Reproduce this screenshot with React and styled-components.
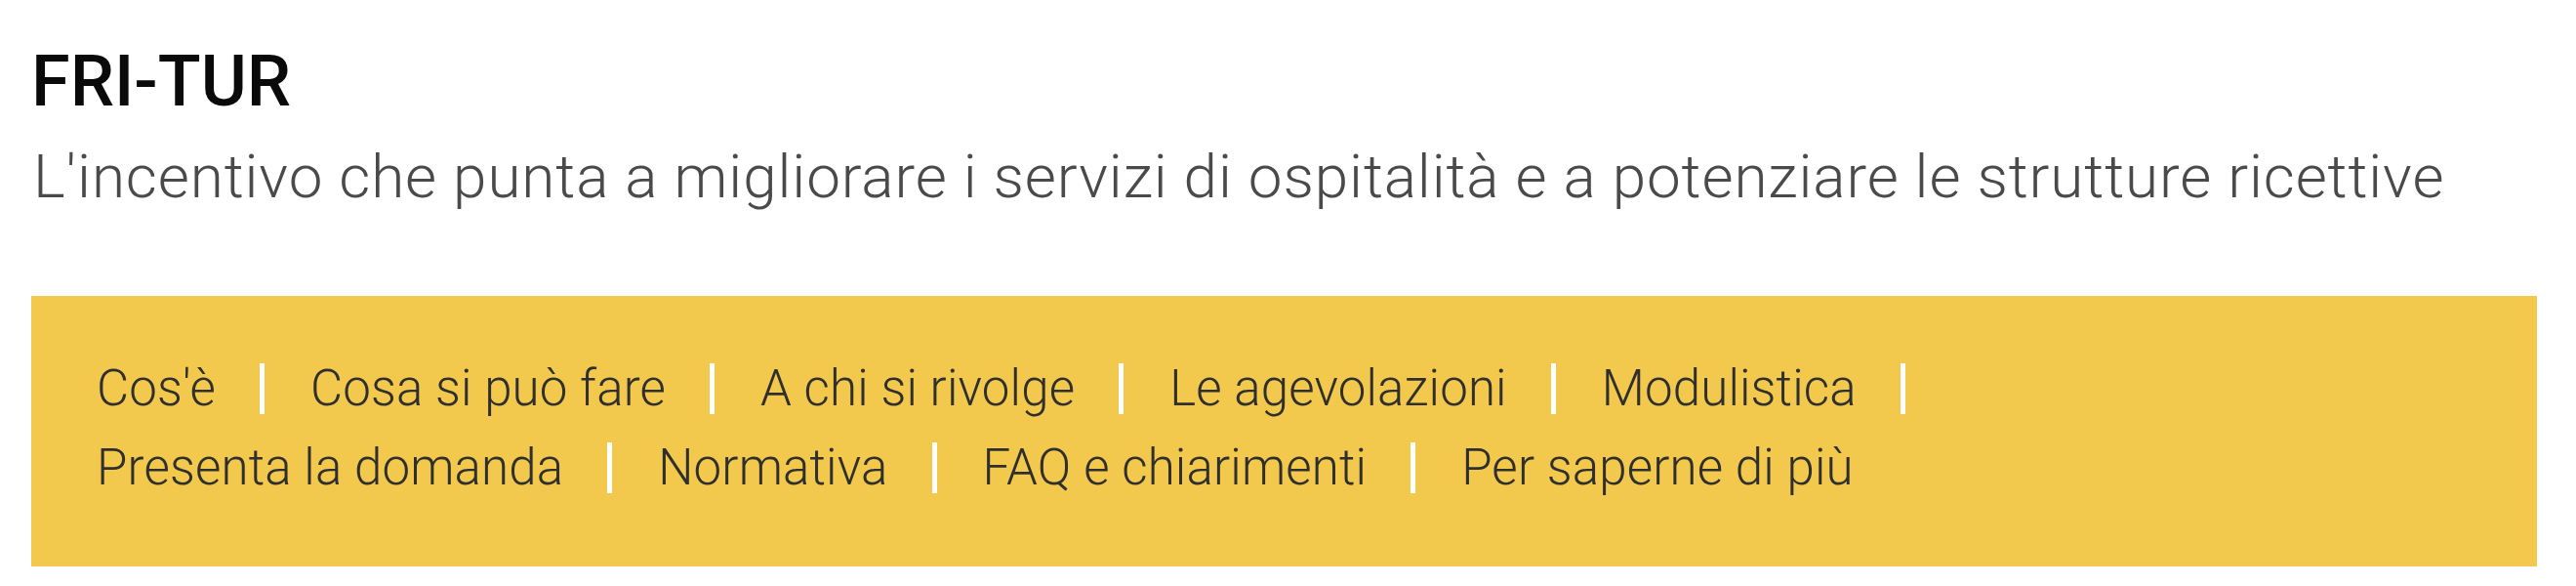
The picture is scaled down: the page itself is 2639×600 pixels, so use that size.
import React from 'react'
import styled, { createGlobalStyle } from 'styled-components'

const GlobalStyle = createGlobalStyle`
  body {
    margin: 0;
    background: #fff;
    font-family: Roboto, "Liberation Sans", sans-serif;
  }
`

const Page = styled.div`
  padding: 48px 40px 18px 32px;
`

const Title = styled.h1`
  margin: 0;
  font-size: 72px;
  line-height: 72px;
  font-weight: 500;
  color: #0a0a0a;
`

const Subtitle = styled.p`
  margin: 20px 0 0 2px;
  font-size: 62px;
  line-height: 81px;
  font-weight: 300;
  letter-spacing: 0.9px;
  color: #4a4a4a;
`

const Box = styled.nav`
  margin-top: 82px;
  width: 2567px;
  box-sizing: border-box;
  background: #f2c94c;
  padding: 54px 67px 61px;
`

const Menu = styled.ul`
  list-style: none;
  margin: 0;
  padding: 0;
  max-width: 2000px;
  display: flex;
  flex-wrap: wrap;
  column-gap: 47px;
`

const Item = styled.li`
  display: flex;
  align-items: center;
  gap: 45px;
  font-size: 51px;
  line-height: 81px;
  font-weight: 300;
  letter-spacing: 0.15px;
  color: #2f2f2f;

  &:not(:last-child)::after {
    content: '';
    display: block;
    width: 5px;
    height: 52px;
    background: #fff;
  }
`

const voci = [
  "Cos'è",
  'Cosa si può fare',
  'A chi si rivolge',
  'Le agevolazioni',
  'Modulistica',
  'Presenta la domanda',
  'Normativa',
  'FAQ e chiarimenti',
  'Per saperne di più'
]

export default function App() {
  return (
    <Page>
      <GlobalStyle />
      <Title>FRI-TUR</Title>
      <Subtitle>L'incentivo che punta a migliorare i servizi di ospitalità e a potenziare le strutture ricettive</Subtitle>

      <Box>
        <Menu>
          {voci.map((v) => (
            <Item key={v}>{v}</Item>
          ))}
        </Menu>
      </Box>
    </Page>
  )
}
